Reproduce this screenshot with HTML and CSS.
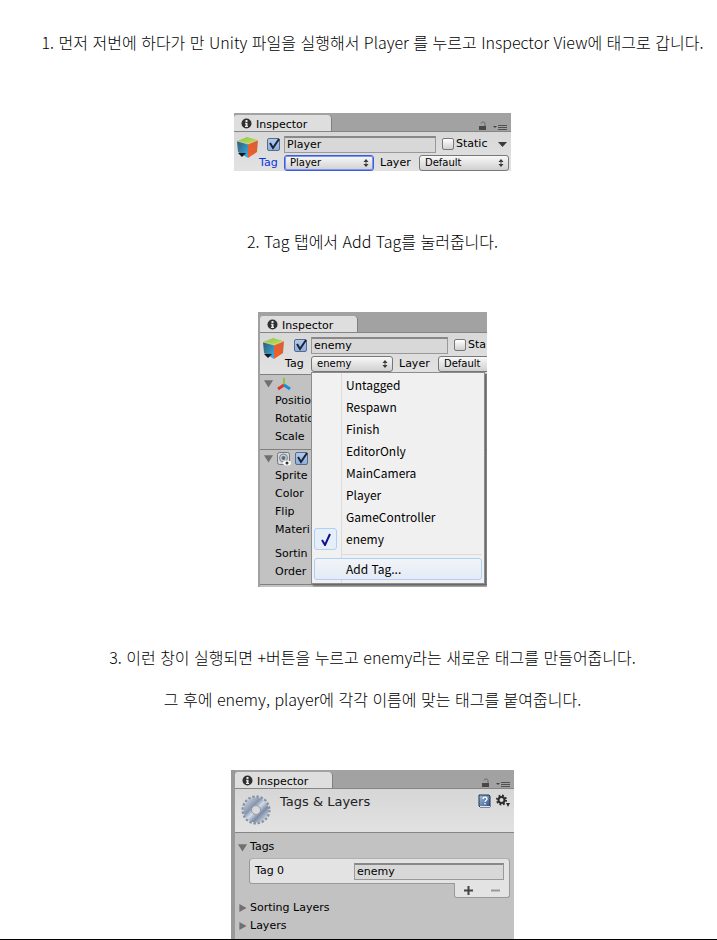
FILE: index.html
```html
<!DOCTYPE html>
<html lang="ko">
<head>
<meta charset="utf-8">
<title>Unity Tag</title>
<link rel="stylesheet" href="styles.css">
</head>
<body>
<svg class="defs" aria-hidden="true">
  <defs>
    <linearGradient id="top" x1="0" y1="0" x2="1" y2="1"><stop offset="0" stop-color="#8fc63f"/><stop offset="1" stop-color="#c5dc6a"/></linearGradient>
    <linearGradient id="left" x1="0" y1="0" x2="1" y2="1"><stop offset="0" stop-color="#35586b"/><stop offset="1" stop-color="#35b4ef"/></linearGradient>
    <linearGradient id="right" x1="1" y1="0" x2="0" y2="1"><stop offset="0" stop-color="#c9643a"/><stop offset="1" stop-color="#ff5a26"/></linearGradient>
    <linearGradient id="steel" x1="0" y1="0" x2="1" y2="1"><stop offset="0" stop-color="#b9c3d2"/><stop offset=".3" stop-color="#8795ad"/><stop offset=".5" stop-color="#d3dbe6"/><stop offset=".75" stop-color="#7c8ba5"/><stop offset="1" stop-color="#bcc6d4"/></linearGradient>
    <linearGradient id="book" x1="0" y1="0" x2="1" y2="1"><stop offset="0" stop-color="#a9c0dc"/><stop offset="1" stop-color="#2c5285"/></linearGradient>
    <symbol id="info" viewBox="0 0 11 11"><circle cx="5.500" cy="5.500" r="5" fill="#303030"/><path d="M4.500 2h2v2h-2zM4 4.800h2.500V8H7v1H4V8h.6V5.700H4z" fill="#e8e8e8"/></symbol>
    <symbol id="lock" viewBox="0 0 8 10"><path d="M2 2.500C2 .500 6 .500 6 2.500V5" fill="none" stroke="#666" stroke-width="1"/><path d="M0 5h7v4H0z" fill="#484848"/></symbol>
    <symbol id="opts" viewBox="0 0 14 7"><path d="M0 2h4L2 4z" fill="#444"/><path d="M5 1.500h9M5 3.500h9M5 5.500h9" stroke="#505050"/></symbol>
    <symbol id="cube" viewBox="0 0 23 23"><path d="M1 5L11 1l11 3-10 4z" fill="url(#top)"/><path d="M1 5l11 3v14L2 16z" fill="url(#left)"/><path d="M12 8l10-4-1 12-9 6z" fill="url(#right)"/><path d="M1 5l11 3 10-4" fill="none" stroke="#e4e4a0" stroke-width=".6"/><path d="M2 17h8l-4 4z" fill="#171717"/></symbol>
    <symbol id="tick" viewBox="0 0 13 13"><path d="M3 5l3 5 6-9" fill="none" stroke="#17233e" stroke-width="2"/></symbol>
    <symbol id="updown" viewBox="0 0 6 8"><path d="M3 0l2.500 3h-5zM3 8L.500 5h5z" fill="#333"/><path d="M3 2v4" stroke="#555"/></symbol>
    <symbol id="down" viewBox="0 0 10 9"><path d="M0 1h10L5 9z" fill="#707070"/></symbol>
    <symbol id="rightarrow" viewBox="0 0 9 10"><path d="M1 0v9l8-4.500z" fill="#707070"/></symbol>
  </defs>
</svg>
<main class="post">
  <p>1. 먼저 저번에 하다가 만 Unity 파일을 실행해서 Player 를 누르고 Inspector View에 태그로 갑니다.</p>

  <section class="panel player">
    <div class="bar">
      <span class="tab"><svg class="info"><use href="#info"/></svg>Inspector</span>
      <svg class="lock"><use href="#lock"/></svg><svg class="opts"><use href="#opts"/></svg>
    </div>
    <div class="head">
      <svg class="cube"><use href="#cube"/></svg>
      <div class="rows">
        <div class="line">
          <span class="cell check"><input type="checkbox" class="on" aria-label="Active" checked><svg><use href="#tick"/></svg></span>
          <input class="text name" type="text" aria-label="Name" value="Player">
          <label class="static"><input type="checkbox">Static</label>
          <svg class="drop" viewBox="0 0 9 5"><path d="M0 0h9L4.500 5z" fill="#3a3a3a"/></svg>
        </div>
        <div class="line">
          <label class="cell tag active" for="tag1">Tag</label>
          <span class="pick focus"><select id="tag1"><option>Player</option></select><svg><use href="#updown"/></svg></span>
          <label class="layer" for="layer1">Layer</label>
          <span class="pick"><select id="layer1"><option>Default</option></select><svg><use href="#updown"/></svg></span>
        </div>
      </div>
    </div>
  </section>

  <p>2. Tag 탭에서 Add Tag를 눌러줍니다.</p>

  <section class="panel enemy">
    <div class="bar">
      <span class="tab"><svg class="info"><use href="#info"/></svg>Inspector</span>
    </div>
    <div class="head">
      <svg class="cube"><use href="#cube"/></svg>
      <div class="rows">
        <div class="line">
          <span class="cell check"><input type="checkbox" class="on" aria-label="Active" checked><svg><use href="#tick"/></svg></span>
          <input class="text name" type="text" aria-label="Name" value="enemy">
          <label class="static"><input type="checkbox">Sta</label>
        </div>
        <div class="line">
          <label class="cell tag" for="tag2">Tag</label>
          <span class="pick"><select id="tag2"><option>enemy</option></select><svg><use href="#updown"/></svg></span>
          <label class="layer" for="layer2">Layer</label>
          <span class="pick"><select id="layer2"><option>Default</option></select><svg><use href="#updown"/></svg></span>
        </div>
      </div>
    </div>
    <div class="component">
      <div class="title"><svg class="fold"><use href="#down"/></svg>
        <svg class="kind" viewBox="0 0 14 14"><path d="M7 8V1" stroke="#8bc832" stroke-width="2"/><path d="M7 8l-6 4" stroke="#e5322d" stroke-width="3"/><path d="M7 8l6 4" stroke="#168fdc" stroke-width="3"/></svg>
      </div>
      <div class="prop">Positio</div><div class="prop">Rotatio</div><div class="prop">Scale</div>
    </div>
    <div class="component">
      <div class="title"><svg class="fold"><use href="#down"/></svg>
        <svg class="kind" viewBox="0 0 14 14"><rect x=".5" y=".5" width="12" height="12" rx="2" fill="#d5d9dd" stroke="#777"/><circle cx="6.500" cy="6" r="4" fill="#c4ced6" stroke="#7b878f"/><circle cx="6.500" cy="6" r="2" fill="#60707b"/><ellipse cx="10" cy="11" rx="4" ry="2.500" fill="#fff"/><circle cx="10" cy="11" r="1.500" fill="#333"/></svg>
        <span class="check"><input type="checkbox" class="on" aria-label="Enabled" checked><svg><use href="#tick"/></svg></span>
      </div>
      <div class="prop">Sprite</div><div class="prop">Color</div><div class="prop">Flip</div><div class="prop">Materi</div>
      <div class="prop sorting">Sortin</div><div class="prop">Order</div>
    </div>
    <div class="component end"></div>
    <div class="menu" role="menu">
      <button role="menuitem">Untagged</button>
      <button role="menuitem">Respawn</button>
      <button role="menuitem">Finish</button>
      <button role="menuitem">EditorOnly</button>
      <button role="menuitem">MainCamera</button>
      <button role="menuitem">Player</button>
      <button role="menuitem">GameController</button>
      <button role="menuitem" class="chosen"><span class="mark"><svg viewBox="0 0 10 13"><path d="M1 7l3 5L9 1" fill="none" stroke="#10108c" stroke-width="2"/></svg></span>enemy</button>
      <hr>
      <button role="menuitem" class="hover">Add Tag...</button>
    </div>
  </section>

  <p>3. 이런 창이 실행되면 +버튼을 누르고 enemy라는 새로운 태그를 만들어줍니다.</p>
  <p>그 후에 enemy, player에 각각 이름에 맞는 태그를 붙여줍니다.</p>

  <section class="panel tags">
    <div class="bar">
      <span class="tab"><svg class="info"><use href="#info"/></svg>Inspector</span>
      <svg class="lock"><use href="#lock"/></svg><svg class="opts"><use href="#opts"/></svg>
    </div>
    <div class="banner">
      <svg class="gear" viewBox="0 0 30 30"><circle cx="15" cy="15" r="13" fill="none" stroke="#8490a3" stroke-width="3" stroke-dasharray="2.400 1.684"/><circle cx="15" cy="15" r="8.500" fill="none" stroke="url(#steel)" stroke-width="8"/><circle cx="15" cy="15" r="4.500" fill="#d9d9d9" stroke="#8e98a8"/></svg>
      <h2>Tags &amp; Layers</h2>
      <svg class="help" viewBox="0 0 13 14"><path d="M1 1h10l1 1v11H2L1 12z" fill="url(#book)" stroke="#1d3354"/><path d="M2 12.500h10" stroke="#dfe6ee"/><path d="M5 5c0-2.500 4-2.500 4 0 0 1.500-2 1.500-2 3M7 9v1.500" fill="none" stroke="#fff" stroke-width="1.300"/></svg>
      <svg class="cog" viewBox="0 0 14 13"><circle cx="5.500" cy="6" r="4.500" fill="none" stroke="#2c2c2c" stroke-width="2" stroke-dasharray="1.800 1.734"/><circle cx="5.500" cy="6" r="3" fill="none" stroke="#2c2c2c" stroke-width="2"/><path d="M10 9h4l-2 4z" fill="#2c2c2c"/></svg>
    </div>
    <div class="list">
      <div class="group"><svg class="fold"><use href="#down"/></svg>Tags</div>
      <div class="entry"><label for="t0">Tag 0</label><input id="t0" class="text" type="text" value="enemy"></div>
      <div class="tools">
        <button aria-label="Add"><svg viewBox="0 0 9 9"><path d="M4.500 0v9M0 4.500h9" stroke="#444" stroke-width="2"/></svg></button>
        <button aria-label="Remove"><svg viewBox="0 0 9 9"><path d="M0 4.500h9" stroke="#999" stroke-width="2"/></svg></button>
      </div>
      <div class="group"><svg class="fold"><use href="#rightarrow"/></svg>Sorting Layers</div>
      <div class="group"><svg class="fold"><use href="#rightarrow"/></svg>Layers</div>
    </div>
  </section>
</main>
<footer class="edge"></footer>
</body>
</html>
```
FILE: styles.css
```css
* { box-sizing: border-box; }
body { margin: 0; background: #fff; color: #000; }
svg { display: block; flex: none; }
.defs { width: 0; height: 0; position: absolute; }
.post { padding: 21px 0 0 28px; font: 16px/42px "Noto Sans CJK KR", sans-serif; }
.post p { margin: 0; text-align: center; font-weight: 300; white-space: nowrap; }

.panel { margin: 50px auto 49px; background: #c2c2c2; font: 11px/18px "DejaVu Sans", sans-serif; overflow: hidden; }
.player { width: 277px; }
.enemy { width: 229px; position: relative; border-left: 2px solid #a0a0a0; }
.tags { width: 283px; border-left: 4px solid #999; margin-bottom: 0; }

.bar { display: flex; align-items: flex-end; height: 19px; padding-right: 4px; background: #a2a2a2; border-bottom: 1px solid #858585; }
.enemy .bar { height: 21px; }
.tab { display: flex; align-items: center; gap: 4px; width: 98px; height: 16px; padding: 3px 0 0 7px; margin-right: auto; background: #dedede; border-right: 1px solid #808080; border-radius: 3px 4px 0 0; }
.info { width: 11px; height: 11px; margin-bottom: 2px; }
.lock { width: 8px; height: 10px; margin-right: 6px; }
.opts { width: 14px; height: 7px; }

.head { display: flex; height: 39px; padding: 3px 3px 0 2px; background: linear-gradient(#d8d8d8, #e2e2e2); }
.enemy .head { height: 41px; }
.cube { width: 23px; height: 23px; margin-top: 1px; }
.rows { flex: 1; }
.line { display: flex; align-items: center; height: 18px; }
.line + .line { margin-top: 1px; }
.cell { flex: none; width: 25px; }
.cell.check { padding-left: 8px; }
.enemy .cell { width: 26px; }
.enemy .cell.check { padding-left: 9px; }
.check { display: grid; }
.check > * { grid-area: 1 / 1; width: 13px; height: 13px; }
.check svg { pointer-events: none; }
.active { color: #0a35e0; }
input, select, button { margin: 0; font: inherit; color: inherit; }
input[type="checkbox"] { appearance: none; flex: none; width: 12px; height: 12px; border: 1px solid #777; border-radius: 2px; background: linear-gradient(#fff, #d0d0d0); }
input[type="checkbox"].on { width: 13px; height: 13px; border-color: #536a91; background: linear-gradient(#b4c9e6, #8fafd9); }
.text { min-width: 0; height: 17px; padding: 0 2px; border: 1px solid #999; border-top: 2px solid #888; background: #d8d8d8; }
.name { flex: 1; }
.enemy .name { flex: none; width: 137px; }
.static { display: flex; align-items: center; gap: 2px; width: 56px; margin-left: 6px; }
.drop { width: 9px; height: 5px; margin-right: 2px; }
.pick { display: grid; align-items: center; flex: none; width: 90px; }
.enemy .pick { width: 82px; }
.pick > * { grid-area: 1 / 1; }
.pick select { appearance: none; width: 100%; height: 16px; padding: 0 5px; border: 1px solid #777; border-radius: 3px; background: linear-gradient(#f8f8f8, #d0d0d0); font-size: 10px; line-height: 14px; }
.pick svg { width: 6px; height: 8px; margin-right: 5px; justify-self: end; pointer-events: none; }
.pick.focus select { border-color: #3b5ce0; box-shadow: inset 0 0 0 1px #7f95e8; }
.layer { flex: none; width: 39px; margin-left: 6px; }
.player .layer { flex: 1; }

.component { border-top: 1px solid #808080; padding: 0 0 3px 4px; white-space: nowrap; }
.title { display: flex; align-items: center; height: 17px; gap: 4px; }
.fold { width: 9px; height: 9px; }
.kind { width: 14px; height: 14px; }
.prop { padding-left: 11px; }
.sorting { margin-top: 6px; }
.end { height: 3px; padding: 0; }

.menu { position: absolute; left: 51px; top: 60px; width: 174px; padding: 1px 2px 3px; border: 1px solid #8c8c8c; background: linear-gradient(90deg, #f1f1f1 29px, #dcdcdc 29px 30px, #f0f0f0 30px); box-shadow: 2px 2px 2px #666; font: 12px/20px "Noto Sans CJK KR", sans-serif; }
.menu button { display: flex; align-items: center; width: 100%; height: 22px; padding: 0 0 0 31px; border: 1px solid transparent; border-radius: 3px; background: none; }
.menu .chosen { padding: 0; gap: 9px; border: 0; }
.mark { display: grid; place-items: center; width: 23px; height: 22px; border: 1px solid #aecff7; border-radius: 3px; background: #e6eef8; }
.mark svg { width: 10px; height: 13px; }
.menu hr { height: 1px; margin: 4px 0 3px 28px; border: 0; background: #dcdcdc; }
.menu .hover { border-color: #aecff7; background: linear-gradient(#f1f4f8, #e4ebf5); }

.banner { display: flex; height: 44px; padding: 5px 4px 0 6px; background: linear-gradient(#d6d6d6, #e2e2e2); border-bottom: 1px solid #858585; }
.gear { width: 30px; height: 30px; margin-top: 1px; }
.banner h2 { margin: 0 auto 0 9px; font-size: 13px; font-weight: 400; line-height: 16px; color: #222; }
.help { width: 13px; height: 14px; margin-right: 5px; }
.cog { width: 14px; height: 13px; }
.list { padding: 5px 4px 4px 3px; }
.group { display: flex; align-items: center; gap: 3px; }
.entry { display: flex; align-items: center; justify-content: space-between; height: 26px; margin: 2px 0 0 11px; padding: 0 5px; background: #e3e3e3; border: 1px solid #999; border-top-color: #b0b0b0; border-radius: 4px 4px 0 3px; }
.entry .text { width: 150px; }
.tools { display: flex; justify-content: space-around; width: 56px; height: 15px; margin: -1px 0 1px auto; background: #e3e3e3; border: 1px solid #999; border-top: 0; border-radius: 0 0 3px 3px; }
.tools button { display: grid; place-items: center; padding: 0; width: 20px; border: 0; background: none; }
.tools svg { width: 9px; height: 9px; }
.edge { height: 2px; background: #000; }
```
